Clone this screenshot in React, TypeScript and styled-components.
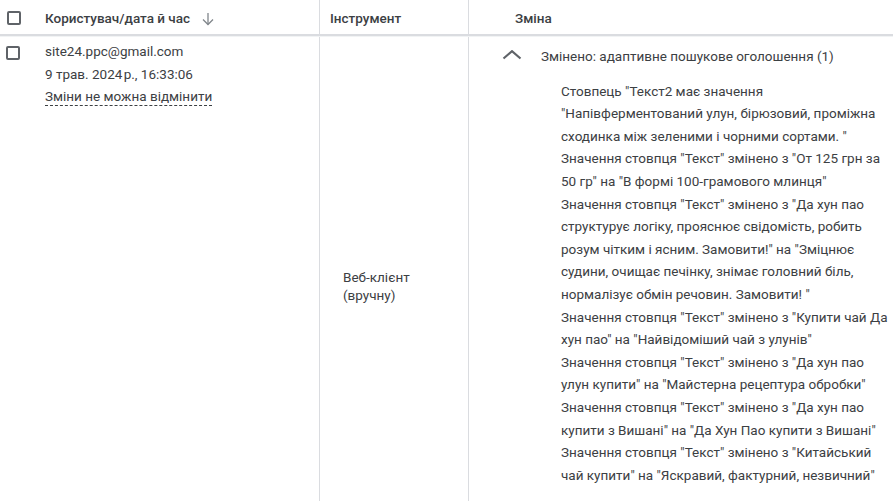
import styled, { createGlobalStyle } from 'styled-components';

const GlobalStyle = createGlobalStyle`
  html, body {
    margin: 0;
    padding: 0;
    background: #ffffff;
  }
  body {
    font-family: Roboto, "Liberation Sans", Arial, sans-serif;
    color: #3c4043;
    overflow: hidden;
  }
`;

const changes: string[][] = [
  [
    'Стовпець "Текст2 має значення',
    '"Напівферментований улун, бірюзовий, проміжна',
    'сходинка між зеленими і чорними сортами. "',
  ],
  ['Значення стовпця "Текст" змінено з "От 125 грн за', '50 гр" на "В формі 100-грамового млинця"'],
  [
    'Значення стовпця "Текст" змінено з "Да хун пао',
    'структурує логіку, прояснює свідомість, робить',
    'розум чітким і ясним. Замовити!" на "Зміцнює',
    'судини, очищає печінку, знімає головний біль,',
    'нормалізує обмін речовин. Замовити! "',
  ],
  ['Значення стовпця "Текст" змінено з "Купити чай Да', 'хун пао" на "Найвідоміший чай з улунів"'],
  ['Значення стовпця "Текст" змінено з "Да хун пао', 'улун купити" на "Майстерна рецептура обробки"'],
  ['Значення стовпця "Текст" змінено з "Да хун пао', 'купити з Вишані" на "Да Хун Пао купити з Вишані"'],
  ['Значення стовпця "Текст" змінено з "Китайський', 'чай купити" на "Яскравий, фактурний, незвичний"'],
];

const ChevronUp = () => (
  <svg width="20" height="10" viewBox="0 0 20 10">
    <polyline points="1.5,8.5 10,1.2 18.5,8.5" fill="none" stroke="#5f6368" strokeWidth="2.2" />
  </svg>
);

const SortArrow = () => (
  <svg width="12" height="14" viewBox="0 0 12 14">
    <line x1="6" y1="1" x2="6" y2="12.5" stroke="#80868b" strokeWidth="1.3" />
    <polyline points="1,7.5 6,12.5 11,7.5" fill="none" stroke="#80868b" strokeWidth="1.3" />
  </svg>
);

const App = () => {
  return (
    <>
      <GlobalStyle />
      <Table>
        <HeaderRow>
          <HeadCell $first>
            <Checkbox />
            <HeadLabel>Користувач/дата й час</HeadLabel>
            <SortIcon>
              <SortArrow />
            </SortIcon>
          </HeadCell>
          <HeadCell>
            <HeadLabel>Інструмент</HeadLabel>
          </HeadCell>
          <HeadCell $last $pad={46}>
            <HeadLabel>Зміна</HeadLabel>
          </HeadCell>
        </HeaderRow>
        <BodyRow>
          <UserCell>
            <Checkbox $body />
            <UserInfo>
              <Line>site24.ppc@gmail.com</Line>
              <Line>9 трав. 2024&#8202;р., 16:33:06</Line>
              <Line>
                <Dotted>Зміни не можна відмінити</Dotted>
              </Line>
            </UserInfo>
          </UserCell>
          <ToolCell>
            <ToolText>
              Веб-клієнт
              <br />
              (вручну)
            </ToolText>
          </ToolCell>
          <ChangeCell>
            <ChangeHeader>
              <Toggle>
                <ChevronUp />
              </Toggle>
              <Line>Змінено: адаптивне пошукове оголошення (1)</Line>
            </ChangeHeader>
            <ChangeList>
              {changes.map((item, i) => (
                <ChangeItem key={i}>
                  {item.map((l, j) => (
                    <Line key={j}>{l}</Line>
                  ))}
                </ChangeItem>
              ))}
            </ChangeList>
          </ChangeCell>
        </BodyRow>
      </Table>
    </>
  );
};

export default App;

const Table = styled.div`
  width: 893px;
  height: 501px;
  overflow: hidden;
  display: flex;
  flex-direction: column;
`;

const HeaderRow = styled.div`
  display: grid;
  grid-template-columns: 320px 149px 1fr;
  height: 34px;
  border-bottom: 2px solid #dadce0;
  box-shadow: 0 1px 0 #f1f3f4;
  flex-shrink: 0;
`;

const HeadCell = styled.div<{ $first?: boolean; $last?: boolean; $pad?: number }>`
  display: flex;
  align-items: center;
  padding-left: ${(p) => (p.$first ? 7 : p.$pad ?? 10)}px;
  border-right: ${(p) => (p.$last ? 'none' : '1px solid #dadce0')};
  box-sizing: border-box;
`;

const HeadLabel = styled.span`
  font-size: 13.5px;
  font-weight: 500;
  color: #3c4043;
  padding-top: 2px;
`;

const SortIcon = styled.span`
  display: flex;
  margin-left: 12px;
  margin-top: 3px;
`;

const Checkbox = styled.span<{ $body?: boolean }>`
  display: inline-block;
  width: 14px;
  height: 14px;
  box-sizing: border-box;
  border: 2px solid #5f6368;
  border-radius: 2px;
  margin-right: ${(p) => (p.$body ? 25 : 24)}px;
  margin-left: ${(p) => (p.$body ? -1 : 0)}px;
  margin-top: ${(p) => (p.$body ? 6 : 2)}px;
  flex-shrink: 0;
`;

const BodyRow = styled.div`
  display: grid;
  grid-template-columns: 320px 149px 1fr;
  margin-top: 1px;
  min-height: 498px;
  flex-shrink: 0;
`;

const UserCell = styled.div`
  display: flex;
  align-items: flex-start;
  padding: 3px 0 0 7px;
  border-right: 1px solid #dadce0;
`;

const UserInfo = styled.div`
  display: flex;
  flex-direction: column;
`;

const Line = styled.div`
  font-size: 13.5px;
  line-height: 22.6px;
  color: #3c4043;
  white-space: nowrap;
`;

const Dotted = styled.span`
  border-bottom: 1px dashed #3c4043;
  padding-bottom: 1px;
`;

const ToolCell = styled.div`
  display: flex;
  align-items: center;
  padding-left: 23px;
  border-right: 1px solid #dadce0;
`;

const ToolText = styled.div`
  font-size: 13.5px;
  line-height: 18.5px;
  color: #3c4043;
`;

const ChangeCell = styled.div`
  display: flex;
  flex-direction: column;
  padding: 8px 0 0 33px;
`;

const ChangeHeader = styled.div`
  display: flex;
  align-items: center;
`;

const Toggle = styled.span`
  display: flex;
  width: 39px;
  margin-top: -2px;
`;

const ChangeList = styled.div`
  display: flex;
  flex-direction: column;
  padding-left: 59px;
  margin-top: 12px;
`;

const ChangeItem = styled.div`
  display: flex;
  flex-direction: column;
`;
